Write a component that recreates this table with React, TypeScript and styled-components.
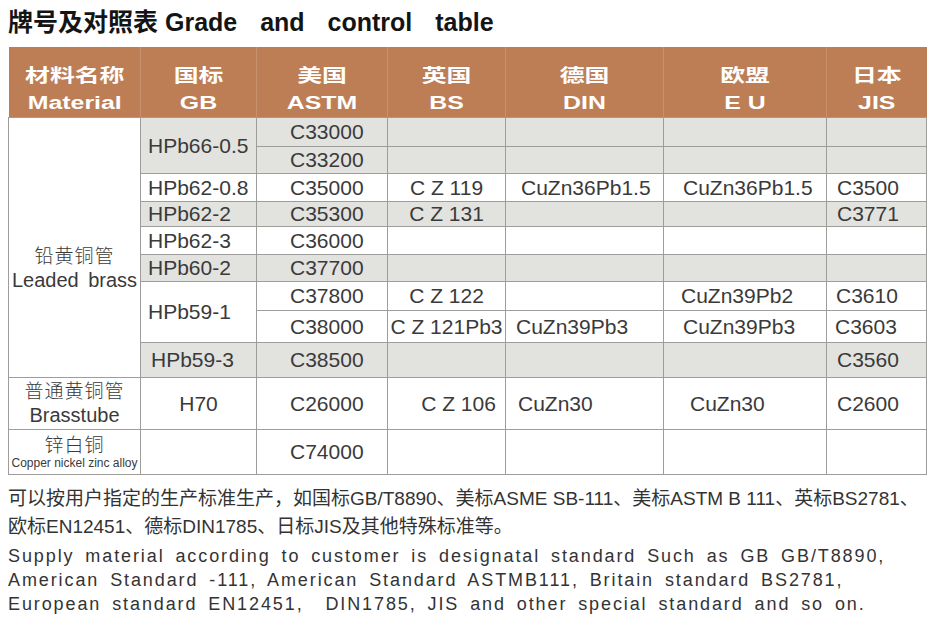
import React from "react";
import styled, { createGlobalStyle } from "styled-components";

type Col = "gb" | "astm" | "bs" | "din" | "eu" | "jis";

// where each column's text starts (left-aligned) or whether it is centred
const colLayout: Record<Col, { align: "left" | "center"; pad: number }> = {
  gb: { align: "left", pad: 7 },
  astm: { align: "left", pad: 33 },
  bs: { align: "center", pad: 0 },
  din: { align: "left", pad: 12 },
  eu: { align: "left", pad: 19 },
  jis: { align: "left", pad: 10 },
};

const GlobalStyle = createGlobalStyle`
  html, body {
    margin: 0;
    background: #ffffff;
  }
  body {
    font-family: "Liberation Sans", "Noto Sans CJK SC", sans-serif;
    color: #333333;
  }
`;

const Page = styled.div`
  width: 934px;
  height: 640px;
  padding: 7px 8px 0;
  box-sizing: border-box;
  overflow: hidden;
`;

const Title = styled.h1`
  margin: 0 0 10px;
  font-size: 25px;
  line-height: 30px;
  font-weight: 700;
  color: #141414;
  white-space: nowrap;
`;

const TitleEn = styled.span`
  word-spacing: 16px;
`;

const Grid = styled.table`
  width: 918px;
  border-collapse: collapse;
  table-layout: fixed;
  color: #3a3a3a;
`;

const HeadRow = styled.tr`
  height: 70px;
`;

const HeadCell = styled.th`
  background: #bd7e56;
  color: #ffffff;
  font-weight: 700;
  font-size: 18px;
  line-height: 27px;
  padding: 16px 0 0;
  vertical-align: top;
  border-left: 1px solid #c8916b;
  white-space: nowrap;

  &:first-child {
    border-left: none;
  }
`;

const HeadLine = styled.span`
  display: block;
  transform: scaleX(1.38);
`;

const Row = styled.tr<{ $h: number }>`
  height: ${(p) => p.$h}px;
`;

const Cell = styled.td<{ $col: Col; $shade?: boolean; $center?: boolean; $pad?: number }>`
  border: 1px solid #9d9d9b;
  background: ${(p) => (p.$shade ? "#e2e2df" : "#ffffff")};
  text-align: ${(p) => (p.$center ? "center" : colLayout[p.$col].align)};
  padding: 0 0 0 ${(p) => p.$pad ?? (p.$center ? 0 : colLayout[p.$col].pad)}px;
  font-size: 21px;
  line-height: 24px;
  white-space: nowrap;
  vertical-align: middle;
  overflow: hidden;
`;

const MatCell = styled.td<{ $top?: number }>`
  border: 1px solid #9d9d9b;
  background: #ffffff;
  text-align: center;
  vertical-align: middle;
  padding: ${(p) => p.$top ?? 0}px 0 0;
  white-space: nowrap;
`;

const MatCn = styled.div`
  font-family: "Noto Sans CJK SC", sans-serif;
  font-weight: 300;
  font-size: 19px;
  line-height: 22px;
  letter-spacing: 1px;
`;

const MatEn = styled.div<{ $small?: boolean }>`
  font-size: ${(p) => (p.$small ? 12 : 20)}px;
  line-height: ${(p) => (p.$small ? 17 : 28)}px;
  word-spacing: ${(p) => (p.$small ? 0 : 4)}px;
`;

const NoteCn = styled.div`
  margin-top: 10px;
  font-size: 19px;
  line-height: 28px;
  color: #333333;
  white-space: nowrap;
`;

const NoteEn = styled.div`
  margin-top: 3px;
  font-size: 18px;
  line-height: 24px;
  letter-spacing: 1.9px;
  word-spacing: 4px;
  color: #333333;
  white-space: nowrap;
`;

const heads = [
  { cn: "材料名称", en: "Material", w: 132 },
  { cn: "国标", en: "GB", w: 116 },
  { cn: "美国", en: "ASTM", w: 131 },
  { cn: "英国", en: "BS", w: 118 },
  { cn: "德国", en: "DIN", w: 158 },
  { cn: "欧盟", en: "E U", w: 163 },
  { cn: "日本", en: "JIS", w: 100 },
];

const Empty = ({ shade }: { shade?: boolean }) => (
  <>
    <Cell $col="bs" $shade={shade} />
    <Cell $col="din" $shade={shade} />
    <Cell $col="eu" $shade={shade} />
    <Cell $col="jis" $shade={shade} />
  </>
);

export default function App() {
  return (
    <Page>
      <GlobalStyle />
      <Title>
        牌号及对照表 <TitleEn>Grade and control table</TitleEn>
      </Title>

      <Grid>
        <colgroup>
          {heads.map((h) => (
            <col key={h.en} style={{ width: h.w }} />
          ))}
        </colgroup>
        <thead>
          <HeadRow>
            {heads.map((h) => (
              <HeadCell key={h.en}>
                <HeadLine>{h.cn}</HeadLine>
                <HeadLine>{h.en}</HeadLine>
              </HeadCell>
            ))}
          </HeadRow>
        </thead>
        <tbody>
          <Row $h={29}>
            <MatCell rowSpan={9} $top={42}>
              <MatCn>铅黄铜管</MatCn>
              <MatEn>Leaded brass</MatEn>
            </MatCell>
            <Cell $col="gb" $shade rowSpan={2}>HPb66-0.5</Cell>
            <Cell $col="astm" $shade>C33000</Cell>
            <Empty shade />
          </Row>
          <Row $h={27}>
            <Cell $col="astm" $shade>C33200</Cell>
            <Empty shade />
          </Row>
          <Row $h={28}>
            <Cell $col="gb">HPb62-0.8</Cell>
            <Cell $col="astm">C35000</Cell>
            <Cell $col="bs">C Z 119</Cell>
            <Cell $col="din" $pad={15}>CuZn36Pb1.5</Cell>
            <Cell $col="eu">CuZn36Pb1.5</Cell>
            <Cell $col="jis">C3500</Cell>
          </Row>
          <Row $h={24}>
            <Cell $col="gb" $shade>HPb62-2</Cell>
            <Cell $col="astm" $shade>C35300</Cell>
            <Cell $col="bs" $shade>C Z 131</Cell>
            <Cell $col="din" $shade />
            <Cell $col="eu" $shade />
            <Cell $col="jis" $shade>C3771</Cell>
          </Row>
          <Row $h={28}>
            <Cell $col="gb">HPb62-3</Cell>
            <Cell $col="astm">C36000</Cell>
            <Empty />
          </Row>
          <Row $h={27}>
            <Cell $col="gb" $shade>HPb60-2</Cell>
            <Cell $col="astm" $shade>C37700</Cell>
            <Empty shade />
          </Row>
          <Row $h={29}>
            <Cell $col="gb" rowSpan={2}>HPb59-1</Cell>
            <Cell $col="astm">C37800</Cell>
            <Cell $col="bs">C Z 122</Cell>
            <Cell $col="din" />
            <Cell $col="eu" $pad={17}>CuZn39Pb2</Cell>
            <Cell $col="jis" $pad={9}>C3610</Cell>
          </Row>
          <Row $h={32}>
            <Cell $col="astm">C38000</Cell>
            <Cell $col="bs">C Z 121Pb3</Cell>
            <Cell $col="din" $pad={10}>CuZn39Pb3</Cell>
            <Cell $col="eu">CuZn39Pb3</Cell>
            <Cell $col="jis" $pad={8}>C3603</Cell>
          </Row>
          <Row $h={35}>
            <Cell $col="gb" $shade $pad={10}>HPb59-3</Cell>
            <Cell $col="astm" $shade>C38500</Cell>
            <Cell $col="bs" $shade />
            <Cell $col="din" $shade />
            <Cell $col="eu" $shade />
            <Cell $col="jis" $shade>C3560</Cell>
          </Row>
          <Row $h={52}>
            <MatCell>
              <MatCn>普通黄铜管</MatCn>
              <MatEn>Brasstube</MatEn>
            </MatCell>
            <Cell $col="gb" $center $pad={0}>H70</Cell>
            <Cell $col="astm">C26000</Cell>
            <Cell $col="bs" $center $pad={24}>C Z 106</Cell>
            <Cell $col="din">CuZn30</Cell>
            <Cell $col="eu" $pad={26}>CuZn30</Cell>
            <Cell $col="jis">C2600</Cell>
          </Row>
          <Row $h={45}>
            <MatCell>
              <MatCn>锌白铜</MatCn>
              <MatEn $small>Copper nickel zinc alloy</MatEn>
            </MatCell>
            <Cell $col="gb" />
            <Cell $col="astm">C74000</Cell>
            <Empty />
          </Row>
        </tbody>
      </Grid>

      <NoteCn>
        可以按用户指定的生产标准生产，如国标GB/T8890、美标ASME SB-111、美标ASTM B 111、英标BS2781、
        <br />
        欧标EN12451、德标DIN1785、日标JIS及其他特殊标准等。
      </NoteCn>
      <NoteEn>
        Supply material according to customer is designatal standard Such as GB GB/T8890,
        <br />
        American Standard -111, American Standard ASTMB111, Britain standard BS2781,
        <br />
        European standard EN12451,&nbsp; DIN1785, JIS and other special standard and so on.
      </NoteEn>
    </Page>
  );
}
